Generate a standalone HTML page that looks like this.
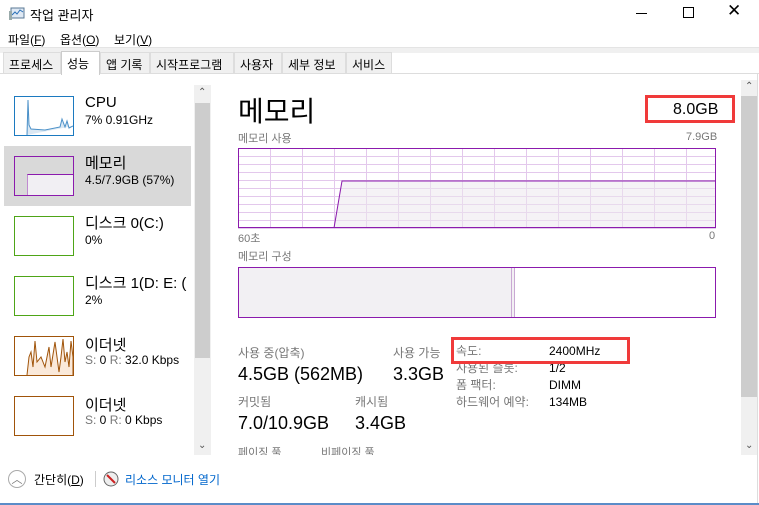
<!DOCTYPE html>
<html><head><meta charset="utf-8"><style>
*{margin:0;padding:0;box-sizing:border-box}
body{width:759px;height:505px;background:#fff;font-family:"Liberation Sans","Noto Sans CJK KR",sans-serif;position:relative;overflow:hidden;color:#000}
.a{position:absolute;white-space:nowrap}
.g{color:#777}
.tab{position:absolute;top:52px;height:21px;border:1px solid #ddd;background:#f0f0f0;font-size:12px;padding:3px 5px 0;border-bottom:none}
.thumb{position:absolute;left:14px;width:60px;height:40px;border:1px solid}
</style></head><body>
<svg class="a" style="left:8px;top:6px" width="18" height="16"><rect x="3" y="2" width="13" height="10" fill="#dfe9f4" stroke="#5a7894"/><polyline points="4,9 7,6 9,8 12,4 15,6" fill="none" stroke="#2a70b8"/><rect x="1" y="5" width="3" height="9" fill="#9aa"/></svg>
<div class="a" style="left:30px;top:5px;font-size:13px">작업 관리자</div>
<div class="a" style="left:636px;top:13px;width:11px;border-top:1px solid #000"></div>
<div class="a" style="left:683px;top:7px;width:11px;height:11px;border:1px solid #000"></div>
<div class="a" style="left:727px;top:1px;font-size:17px;font-weight:300">✕</div>
<div class="a" style="left:8px;top:31px;font-size:12px">파일(<u>F</u>)</div>
<div class="a" style="left:60px;top:31px;font-size:12px">옵션(<u>O</u>)</div>
<div class="a" style="left:114px;top:31px;font-size:12px">보기(<u>V</u>)</div>
<div class="a" style="left:0;top:47px;width:759px;height:6px;background:#f0f0f0;border-top:1px solid #e4e4e4"></div>
<div class="a" style="left:0;top:73px;width:759px;border-top:1px solid #ddd"></div>
<div class="tab" style="left:3px;width:58px">프로세스</div>
<div class="tab" style="left:61px;top:51px;height:24px;width:39px;background:#fff;border-color:#ccc">성능</div>
<div class="tab" style="left:100px;width:50px">앱 기록</div>
<div class="tab" style="left:150px;width:84px">시작프로그램</div>
<div class="tab" style="left:234px;width:48px">사용자</div>
<div class="tab" style="left:282px;width:64px">세부 정보</div>
<div class="tab" style="left:346px;width:46px">서비스</div>
<div class="a" style="left:757px;top:74px;height:430px;border-left:1px solid #ddd"></div>
<div class="a" style="left:4px;top:146px;width:187px;height:60px;background:#d9d9d9"></div>
<div class="thumb" style="top:96px;border-color:#1c7ac0"><svg width="58" height="38"><polyline points="12,38 13,3 14,28 16,32 30,33 45,30 47,22 50,30 52,24 54,31 58,29" fill="#dbe8f3" stroke="#4a90c8"/></svg></div>
<div class="a" style="left:85px;top:94px;font-size:15px">CPU</div>
<div class="a" style="left:85px;top:113px;font-size:12px">7% 0.91GHz</div>
<div class="thumb" style="top:156px;border-color:#8b1aad"><div class="a" style="left:12px;top:17px;width:46px;height:21px;background:#f1eff3;border-top:1px solid #8b1aad;border-left:1px solid #c08ad0"></div></div>
<div class="a" style="left:85px;top:152px;font-size:15px">메모리</div>
<div class="a" style="left:85px;top:173px;font-size:12px">4.5/7.9GB (57%)</div>
<div class="thumb" style="top:216px;border-color:#4ea517"></div>
<div class="a" style="left:85px;top:212px;font-size:15px">디스크 0(C:)</div>
<div class="a" style="left:85px;top:233px;font-size:12px">0%</div>
<div class="thumb" style="top:276px;border-color:#4ea517"></div>
<div class="a" style="left:85px;top:272px;font-size:15px">디스크 1(D: E: (</div>
<div class="a" style="left:85px;top:293px;font-size:12px">2%</div>
<div class="thumb" style="top:336px;border-color:#a0540a"><svg width="58" height="38"><polyline points="12,38 14,20 16,15 18,30 20,4 22,25 26,20 30,30 34,10 36,30 40,5 44,35 46,20 48,2 50,25 52,15 54,30 56,4 58,20 58,38" fill="#fae9da" stroke="#a0540a"/></svg></div>
<div class="a" style="left:85px;top:334px;font-size:15px">이더넷</div>
<div class="a" style="left:85px;top:353px;font-size:12px"><span class="g">S:</span> 0 <span class="g">R:</span> 32.0 Kbps</div>
<div class="thumb" style="top:396px;border-color:#a0540a"></div>
<div class="a" style="left:85px;top:394px;font-size:15px">이더넷</div>
<div class="a" style="left:85px;top:413px;font-size:12px"><span class="g">S:</span> 0 <span class="g">R:</span> 0 Kbps</div>
<div class="a" style="left:194px;top:85px;width:17px;height:370px;background:#f0f0f0"></div>
<div class="a" style="left:195px;top:103px;width:15px;height:255px;background:#cdcdcd"></div>
<div class="a" style="left:198px;top:87px;font-size:10px;color:#555">⌃</div>
<div class="a" style="left:198px;top:440px;font-size:10px;color:#555">⌄</div>
<div class="a" style="left:238px;top:90px;font-size:28px">메모리</div>
<div class="a" style="left:645px;top:95px;width:90px;height:28px;border:3px solid #f03a3a"></div>
<div class="a" style="left:673px;top:101px;font-size:16px">8.0GB</div>
<div class="a g" style="left:238px;top:130px;font-size:11px">메모리 사용</div>
<div class="a g" style="left:686px;top:131px;font-size:11px">7.9GB</div>
<svg class="a" style="left:238px;top:148px" width="478" height="81">
<defs><pattern id="p" width="32" height="8" patternUnits="userSpaceOnUse" x="0" y="0"><path d="M0 .5H32M.5 0V8" stroke="#e3c8ec" fill="none" stroke-width="1"/></pattern></defs>
<rect width="478" height="81" fill="url(#p)"/>
<polygon points="96,80 104,33 477,33 477,80" fill="#ece8ee" fill-opacity=".55"/>
<polyline points="96,80 104,33 477,33" fill="none" stroke="#8b1aad"/>
<rect x=".5" y=".5" width="477" height="79" fill="none" stroke="#8b1aad"/>
</svg>
<div class="a g" style="left:238px;top:230px;font-size:11px">60초</div>
<div class="a g" style="left:709px;top:230px;font-size:11px">0</div>
<div class="a g" style="left:238px;top:248px;font-size:11px">메모리 구성</div>
<div class="a" style="left:238px;top:267px;width:478px;height:51px;border:1px solid #8b1aad"><div class="a" style="left:0;top:0;width:276px;height:49px;background:#f2f0f3;border-right:4px double #c9a8d3"></div></div>
<div class="a g" style="left:238px;top:344px;font-size:12px">사용 중(압축)</div>
<div class="a" style="left:238px;top:364px;font-size:18px">4.5GB (562MB)</div>
<div class="a g" style="left:393px;top:344px;font-size:12px">사용 가능</div>
<div class="a" style="left:393px;top:364px;font-size:18px">3.3GB</div>
<div class="a g" style="left:238px;top:393px;font-size:12px">커밋됨</div>
<div class="a" style="left:238px;top:413px;font-size:18px">7.0/10.9GB</div>
<div class="a g" style="left:355px;top:393px;font-size:12px">캐시됨</div>
<div class="a" style="left:355px;top:413px;font-size:18px">3.4GB</div>
<div class="a g" style="left:238px;top:444px;font-size:11px;height:12px;overflow:hidden">페이징 풀</div>
<div class="a g" style="left:321px;top:444px;font-size:11px;height:12px;overflow:hidden">비페이징 풀</div>
<div class="a g" style="left:456px;top:343px;font-size:12px;line-height:17px">속도:<br>사용된 슬롯:<br>폼 팩터:<br>하드웨어 예약:</div>
<div class="a" style="left:549px;top:343px;font-size:12px;line-height:17px">2400MHz<br>1/2<br>DIMM<br>134MB</div>
<div class="a" style="left:451px;top:337px;width:179px;height:27px;border:3px solid #f03a3a;background:transparent"></div>
<div class="a" style="left:741px;top:80px;width:16px;height:375px;background:#f0f0f0"></div>
<div class="a" style="left:741px;top:96px;width:16px;height:301px;background:#cdcdcd"></div>
<div class="a" style="left:745px;top:81px;font-size:10px;color:#555">⌃</div>
<div class="a" style="left:745px;top:440px;font-size:10px;color:#555">⌄</div>
<div class="a" style="left:0;top:455px;width:757px;height:48px;background:#fff"></div>
<div class="a" style="left:8px;top:470px;width:18px;height:18px;border:1px solid #aaa;border-radius:50%;font-size:11px;color:#777;text-align:center;line-height:18px">︿</div>
<div class="a" style="left:34px;top:471px;font-size:12px">간단히(<u>D</u>)</div>
<div class="a" style="left:95px;top:471px;height:16px;border-left:1px solid #ccc"></div>
<svg class="a" style="left:103px;top:471px" width="16" height="16"><circle cx="8" cy="8" r="7" fill="#eee" stroke="#666"/><line x1="4" y1="4" x2="12" y2="12" stroke="#c22" stroke-width="2"/></svg>
<div class="a" style="left:125px;top:471px;font-size:12px;color:#0066cc">리소스 모니터 열기</div>
<div class="a" style="left:0;top:503px;width:759px;height:2px;background:#5b8cc8"></div>
</body></html>
